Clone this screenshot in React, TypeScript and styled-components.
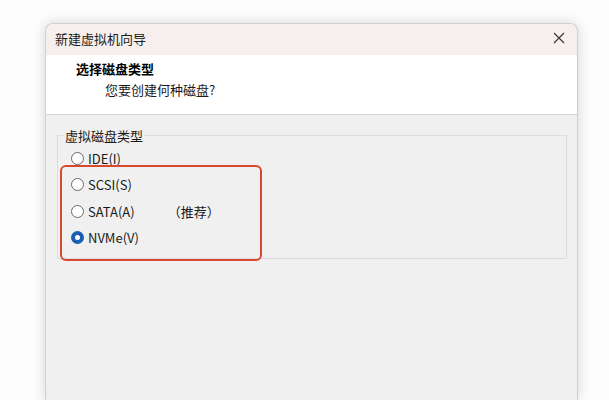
import React from 'react'
import styled, { createGlobalStyle } from 'styled-components'

const GlobalStyle = createGlobalStyle`
  html, body {
    margin: 0;
    padding: 0;
    background: #ffffff;
    overflow: hidden;
  }
  body {
    font-family: "Noto Sans CJK SC", "Noto Sans", sans-serif;
    color: #1a1a1a;
  }
`

const Page = styled.div`
  width: 609px;
  height: 400px;
  padding: 23px 0 0 45px;
  box-sizing: border-box;
  background: #fdfdfd;
  overflow: hidden;
`

const Window = styled.div`
  width: 533px;
  height: 377px;
  border: 1px solid #cfcfcf;
  border-bottom: none;
  border-radius: 8px 8px 0 0;
  overflow: hidden;
  box-sizing: border-box;
  box-shadow: 0 0 14px rgba(0, 0, 0, 0.16);
  display: flex;
  flex-direction: column;
  background: #f0f0f0;
`

const TitleBar = styled.div`
  height: 31px;
  flex-shrink: 0;
  background: #f7efed;
  display: flex;
  align-items: center;
  justify-content: space-between;
  padding: 0 10px 3px 9px;
  box-sizing: border-box;
  font-size: 13px;
  color: #1c1c1c;
`

const CloseButton = styled.button`
  border: none;
  background: transparent;
  padding: 0;
  width: 16px;
  height: 16px;
  display: flex;
  align-items: center;
  justify-content: center;
  cursor: pointer;
`

const Header = styled.div`
  height: 60px;
  flex-shrink: 0;
  background: #ffffff;
  border-bottom: 1px solid #d6d6d6;
  padding: 5px 0 0 30px;
  box-sizing: border-box;
`

const HeaderTitle = styled.div`
  font-size: 13px;
  font-weight: 700;
  line-height: 18px;
  color: #000;
`

const HeaderSub = styled.div`
  font-size: 13px;
  line-height: 18px;
  margin: 3px 0 0 29px;
  color: #1a1a1a;
`

const Body = styled.div`
  flex: 1;
  padding: 12px 10px 0 11px;
`

const Group = styled.fieldset`
  margin: 0;
  height: 132px;
  box-sizing: border-box;
  border: 1px solid #dcdcdc;
  padding: 0 10px 0 6px;
`

const Legend = styled.legend`
  font-size: 13px;
  line-height: 17px;
  padding: 0 1px;
  margin-left: 0;
  color: #1a1a1a;
`

const OptionList = styled.div`
  position: relative;
  display: grid;
  grid-auto-rows: 26.5px;
  margin-top: 1px;
  padding-left: 7px;
`

const Option = styled.label`
  display: flex;
  align-items: center;
  font-size: 13px;
  color: #1a1a1a;
  cursor: pointer;
`

const Radio = styled.span<{ $checked?: boolean }>`
  width: 13px;
  height: 13px;
  border-radius: 50%;
  box-sizing: border-box;
  border: ${({ $checked }) => ($checked ? '4px solid #1a5fb4' : '1px solid #6a6a6a')};
  background: #ffffff;
  margin-right: 4px;
  flex-shrink: 0;
`

const Suffix = styled.span`
  margin-left: 33px;
`

const Highlight = styled.div`
  position: absolute;
  left: -4px;
  top: 20px;
  width: 202px;
  height: 96px;
  border: 2px solid #d8482c;
  border-radius: 6px;
  box-sizing: border-box;
  pointer-events: none;
`

const OPTIONS = [
  { id: 'ide', label: 'IDE(I)' },
  { id: 'scsi', label: 'SCSI(S)' },
  { id: 'sata', label: 'SATA(A)', suffix: '（推荐）' },
  { id: 'nvme', label: 'NVMe(V)' },
]

export default function App() {
  const [selected, setSelected] = React.useState('nvme')

  return (
    <>
      <GlobalStyle />
      <Page>
        <Window>
          <TitleBar>
            <span>新建虚拟机向导</span>
            <CloseButton type="button" aria-label="关闭">
              <svg width="12" height="12" viewBox="0 0 12 12">
                <path d="M1 1 L11 11 M11 1 L1 11" stroke="#333" strokeWidth="1.1" fill="none" />
              </svg>
            </CloseButton>
          </TitleBar>
          <Header>
            <HeaderTitle>选择磁盘类型</HeaderTitle>
            <HeaderSub>您要创建何种磁盘?</HeaderSub>
          </Header>
          <Body>
            <Group>
              <Legend>虚拟磁盘类型</Legend>
              <OptionList>
                {OPTIONS.map((opt) => (
                  <Option key={opt.id} onClick={() => setSelected(opt.id)}>
                    <Radio $checked={selected === opt.id} />
                    {opt.label}
                    {opt.suffix && <Suffix>{opt.suffix}</Suffix>}
                  </Option>
                ))}
                <Highlight />
              </OptionList>
            </Group>
          </Body>
        </Window>
      </Page>
    </>
  )
}
